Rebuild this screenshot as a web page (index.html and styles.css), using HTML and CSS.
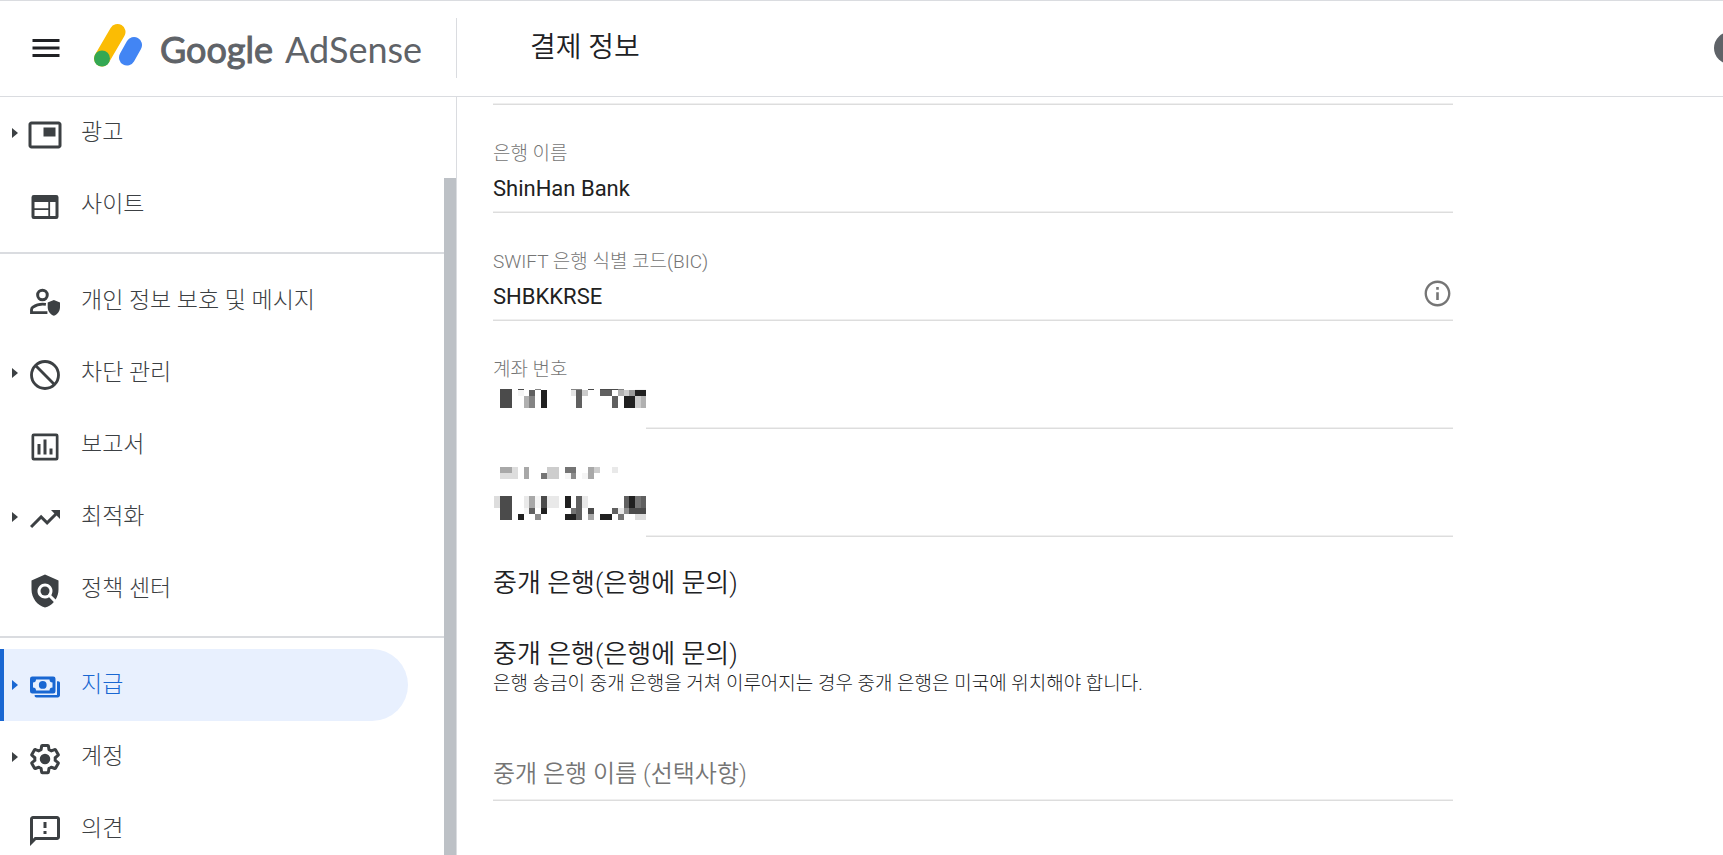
FILE: index.html
```html
<!DOCTYPE html>
<html lang="ko">
<head>
    <meta charset="UTF-8">
    <meta name="viewport" content="width=device-width, initial-scale=1.0">
    <title>Google AdSense</title>
    <link rel="stylesheet" href="styles.css">
</head>
<body>
    <header class="header">
        <div class="brand">
            <button class="icon-btn" type="button" aria-label="메뉴">
                <svg viewBox="0 0 24 24"><path d="M3 6h18v2H3zM3 11h18v2H3zM3 16h18v2H3z"/></svg>
            </button>
            <a href="#" class="logo">
                <svg class="logo-mark" viewBox="0 0 50 44">
                    <path d="M24.500 9L9 35.500" stroke="#fbbc04"/>
                    <path d="M41 22L34 34.500" stroke="#4285f4"/>
                    <circle cx="9" cy="35.500" r="8" fill="#34a853"/>
                </svg>
                <span class="logo-text"><span class="logo-google">Google</span> AdSense</span>
            </a>
        </div>
        <h1>결제 정보</h1>
        <button class="help-btn" type="button" aria-label="도움말"></button>
    </header>

    <div class="layout">
        <aside class="sidebar">
            <nav class="nav">
                <a href="#" class="nav-item has-children">
                    <svg viewBox="0 0 24 24"><path fill-rule="evenodd" d="M21 3H3c-1.100 0-2 .9-2 2v14c0 1.100.9 2 2 2h18c1.100 0 2-.9 2-2V5c0-1.100-.9-2-2-2zm0 16H3V5h18zM11 7h8v6h-8z"/></svg>
                    <span>광고</span>
                </a>
                <a href="#" class="nav-item">
                    <svg viewBox="0 0 24 24"><path fill-rule="evenodd" d="M4.500 4h15A1.500 1.500 0 0 1 21 5.500v13a1.500 1.500 0 0 1-1.500 1.500h-15A1.500 1.500 0 0 1 3 18.500v-13A1.500 1.500 0 0 1 4.500 4zM5 8.700v4.100h9.200V8.700zM5 14v4h9.200v-4zm10.400-5.300V18H19V8.700z"/></svg>
                    <span>사이트</span>
                </a>
                <hr>
                <a href="#" class="nav-item">
                    <svg viewBox="0 0 24 24">
                        <circle cx="10.300" cy="6.700" r="3.200" fill="none" stroke="currentColor" stroke-width="2"/>
                        <path fill="none" stroke="currentColor" stroke-width="1.900" d="M12.600 12.900c-3.400-.5-6.900.6-8.600 1.800-.6.400-1 1-1 1.800v1.900h10.600"/>
                        <path d="M17.900 10l4.100 1.600v3c0 2.700-1.700 5.100-4.100 5.900-2.400-.8-4.100-3.200-4.100-5.900v-3z"/>
                    </svg>
                    <span>개인 정보 보호 및 메시지</span>
                </a>
                <a href="#" class="nav-item has-children">
                    <svg viewBox="0 0 24 24"><path fill="none" stroke="currentColor" stroke-width="1.900" d="M12 3a9 9 0 1 0 0 18a9 9 0 1 0 0-18zM5.700 5.700l12.600 12.600"/></svg>
                    <span>차단 관리</span>
                </a>
                <a href="#" class="nav-item">
                    <svg viewBox="0 0 24 24"><path fill-rule="evenodd" d="M4.500 3h15A1.500 1.500 0 0 1 21 4.500v15a1.500 1.500 0 0 1-1.500 1.500h-15A1.500 1.500 0 0 1 3 19.500v-15A1.500 1.500 0 0 1 4.500 3zM4.800 4.800v14.400h14.400V4.800zM7 10h2v7H7zm4-3h2v10h-2zm4 6h2v4h-2z"/></svg>
                    <span>보고서</span>
                </a>
                <a href="#" class="nav-item has-children">
                    <svg viewBox="0 0 24 24"><path d="M16 6l2.290 2.290-4.880 4.880-4-4L2 16.590 3.410 18l6-6 4 4 6.300-6.290L22 12V6z"/></svg>
                    <span>최적화</span>
                </a>
                <a href="#" class="nav-item">
                    <svg viewBox="0 0 24 24"><path d="M21 5l-9-4-9 4v6c0 5.550 3.840 10.740 9 12 2.300-.56 4.330-1.900 5.880-3.710l-3.120-3.120c-1.940 1.290-4.580 1.070-6.290-.64-1.950-1.950-1.950-5.120 0-7.070 1.950-1.950 5.120-1.950 7.070 0 1.710 1.710 1.920 4.350.64 6.290l2.900 2.900C20.290 15.690 21 13.380 21 11z"/><circle cx="12" cy="12" r="3"/></svg>
                    <span>정책 센터</span>
                </a>
                <hr>
                <a href="#" class="nav-item has-children active">
                    <svg viewBox="0 0 24 24">
                        <path fill-rule="evenodd" d="M3.500 5h14A1.500 1.500 0 0 1 19 6.500v8.300a1.500 1.500 0 0 1-1.500 1.500h-14A1.500 1.500 0 0 1 2 14.800V6.500A1.500 1.500 0 0 1 3.500 5zM6 7a2 2 0 0 1-2 2v3.300a2 2 0 0 1 2 2h9a2 2 0 0 1 2-2V9a2 2 0 0 1-2-2z"/>
                        <circle cx="10.500" cy="10.600" r="2.600"/>
                        <path d="M20 8.200h.8c.7 0 1.200.5 1.200 1.200v8.100c0 .8-.7 1.500-1.500 1.500H6.300c-.7 0-1.200-.5-1.200-1.100v-.6H20z"/>
                    </svg>
                    <span>지급</span>
                </a>
                <a href="#" class="nav-item has-children">
                    <svg viewBox="0 0 24 24">
                        <path fill="none" stroke="currentColor" stroke-width="2.200" stroke-linejoin="round" transform="translate(1.100 1.100) scale(.91)" d="M19.430 12.980c.04-.32.07-.64.07-.98 0-.34-.03-.66-.07-.98l2.110-1.650c.19-.15.24-.42.12-.64l-2-3.460c-.09-.16-.26-.25-.44-.25-.06 0-.12.010-.17.030l-2.490 1c-.52-.4-1.080-.73-1.690-.98l-.38-2.650C14.460 2.180 14.250 2 14 2h-4c-.25 0-.46.18-.49.42l-.38 2.650c-.61.25-1.170.59-1.690.98l-2.490-1c-.06-.02-.12-.03-.18-.03-.17 0-.34.09-.43.25l-2 3.460c-.13.22-.07.49.12.64l2.110 1.650c-.04.32-.07.65-.07.98 0 .33.03.66.07.98l-2.110 1.650c-.19.15-.24.42-.12.64l2 3.460c.09.16.26.25.44.25.06 0 .12-.01.17-.03l2.490-1c.52.4 1.080.73 1.690.98l.38 2.650c.03.24.24.42.49.42h4c.25 0 .46-.18.49-.42l.38-2.650c.61-.25 1.170-.59 1.690-.98l2.490 1c.06.02.12.03.18.03.17 0 .34-.09.43-.25l2-3.460c.12-.22.07-.49-.12-.64z"/>
                        <circle cx="12" cy="12" r="3.500"/>
                    </svg>
                    <span>계정</span>
                </a>
                <a href="#" class="nav-item">
                    <svg viewBox="0 0 24 24"><path d="M20 2H4c-1.100 0-1.990.9-1.990 2L2 22l4-4h14c1.100 0 2-.9 2-2V4c0-1.100-.9-2-2-2zm0 14H5.170L4 17.170V4h16zM11 12h2v2h-2zm0-6h2v4h-2z"/></svg>
                    <span>의견</span>
                </a>
            </nav>
            <div class="scrollbar"><div class="scrollbar-thumb"></div></div>
        </aside>

        <main class="content">
            <form class="form">
                <div class="field-end"></div>
                <div class="field">
                    <label for="bank-name">은행 이름</label>
                    <input type="text" id="bank-name" value="ShinHan Bank">
                </div>
                <div class="field">
                    <label for="swift">SWIFT 은행 식별 코드(BIC)</label>
                    <div class="input-row">
                        <input type="text" id="swift" value="SHBKKRSE">
                        <button class="info-btn" type="button" aria-label="정보">
                            <svg viewBox="0 0 24 24"><path d="M11 7h2v2h-2zm0 4h2v6h-2zm1-9C6.480 2 2 6.480 2 12s4.480 10 10 10 10-4.480 10-10S17.520 2 12 2zm0 18.200c-4.500 0-8.200-3.700-8.200-8.200s3.700-8.200 8.200-8.200 8.200 3.700 8.200 8.200-3.700 8.200-8.200 8.200z"/></svg>
                        </button>
                    </div>
                </div>
                <div class="field">
                    <label for="account">계좌 번호</label>
                    <input type="text" id="account">
                    <svg class="mask" width="153" height="40" shape-rendering="crispEdges">
                        <path fill="#4b4b4b" d="M7 0h12v19H7zM25 0h6v1h-6zM95 0h6v1h-6zM107 0h18v1h-18z"/>
                        <path fill="#848484" d="M42 0h6v1h-6zM78 0h11v1H78zM125 0h6v1h-6zM36 7h6v12h-6z"/>
                        <path fill="#f5f5f5" d="M25 1h6v6h-6zM142 0h11v1h-11z"/>
                        <path fill="#606060" d="M36 1h6v6h-6zM83 1h6v18h-6zM107 1h12v6h-12zM119 7h6v12h-6z"/>
                        <path fill="#202020" d="M48 1h6v18h-6zM142 1h11v6h-11zM131 7h11v12h-11z"/>
                        <path fill="#b0b0b0" d="M31 7h5v12h-5zM125 1h6v6h-6zM148 7h5v12h-5z"/>
                        <path fill="#e5e5e5" d="M78 1h5v6h-5z"/>
                        <path fill="#cbcbcb" d="M89 1h6v6h-6zM131 1h5v6h-5zM142 7h6v12h-6z"/>
                        <path fill="#999" d="M136 1h6v6h-6z"/>
                    </svg>
                </div>
                <div class="field">
                    <input type="text" aria-label="계좌 번호 확인">
                    <svg class="mask" width="153" height="108" shape-rendering="crispEdges">
                        <path fill="#a8a8a8" d="M7 38h12v6H7zM31 38h5v12h-5zM95 38h6v12h-6zM36 67h6v12h-6zM95 85h6v6h-6z"/>
                        <path fill="#ddd" d="M19 38h6v6h-6zM7 44h18v6H7zM1 67h6v12H1zM142 85h11v6h-11z"/>
                        <path fill="#cdcdcd" d="M54 38h12v12H54zM101 38h6v6h-6z"/>
                        <path fill="#747474" d="M72 38h11v6H72zM48 44h6v6h-6zM78 79h5v6h-5zM142 67h6v12h-6zM125 85h6v6h-6z"/>
                        <path fill="#e9e9e9" d="M119 38h6v6h-6zM31 67h5v12h-5zM54 67h12v12H54zM89 67h6v12h-6zM125 79h6v6h-6z"/>
                        <path fill="#f5f5f5" d="M72 44h6v6h-6zM89 44h6v6h-6zM42 67h6v12h-6zM31 79h5v6h-5z"/>
                        <path fill="#8c8c8c" d="M78 44h5v6h-5zM42 85h6v6h-6zM131 79h5v6h-5z"/>
                        <path fill="#4b4b4b" d="M7 67h12v24H7zM48 67h6v12h-6zM95 79h6v6h-6zM136 79h17v6h-17z"/>
                        <path fill="#606060" d="M36 79h6v6h-6zM83 67h6v24h-6zM119 79h6v6h-6zM131 67h5v12h-5zM148 67h5v12h-5z"/>
                        <path fill="#202020" d="M25 85h6v6h-6zM48 79h6v6h-6zM72 67h6v12h-6zM72 85h11v6H72zM107 85h12v6h-12zM136 67h6v12h-6z"/>
                    </svg>
                </div>
                <h2>중개 은행(은행에 문의)</h2>
                <h2>중개 은행(은행에 문의)</h2>
                <p>은행 송금이 중개 은행을 거쳐 이루어지는 경우 중개 은행은 미국에 위치해야 합니다.</p>
                <div class="field field-optional">
                    <input type="text" placeholder="중개 은행 이름 (선택사항)">
                </div>
            </form>
        </main>
    </div>
</body>
</html>
```
FILE: styles.css
```css
* {
    margin: 0;
    padding: 0;
    box-sizing: border-box;
}

body {
    height: 100vh;
    display: flex;
    flex-direction: column;
    overflow: hidden;
    background: #fff;
    color: #202124;
    font-family: Roboto, 'Noto Sans CJK KR', sans-serif;
    font-weight: 300;
}

a {
    color: inherit;
    text-decoration: none;
}

button {
    border: none;
    background: none;
    cursor: pointer;
}

svg {
    display: block;
    flex-shrink: 0;
    fill: currentColor;
}

.header {
    display: flex;
    align-items: center;
    flex-shrink: 0;
    height: 97px;
    padding-bottom: 2px;
    border-top: 1px solid #dadce0;
    border-bottom: 1px solid #dadce0;
    overflow: hidden;
}

.brand {
    display: flex;
    align-items: center;
    width: 457px;
    height: 60px;
    padding-left: 28px;
    border-right: 1px solid #dadce0;
}

.icon-btn svg {
    width: 36px;
    height: 36px;
    color: #202124;
}

.logo {
    display: flex;
    align-items: center;
    margin-left: 29px;
    color: #5f6368;
}

.logo-mark {
    width: 50px;
    height: 44px;
    margin-bottom: 6px;
    fill: none;
    stroke-width: 16px;
    stroke-linecap: round;
}

.logo-text {
    margin: 2px 0 0 17px;
    font-family: Lato, sans-serif;
    font-size: 36px;
    font-weight: 400;
    line-height: 44px;
    white-space: nowrap;
}

.logo-google {
    margin-right: 4px;
    -webkit-text-stroke: 1px #5f6368;
}

.header h1 {
    padding-left: 73px;
    font-size: 28px;
    font-weight: 350;
    line-height: 40px;
}

.help-btn {
    flex-shrink: 0;
    width: 32px;
    height: 32px;
    margin-left: auto;
    margin-right: -23px;
    border-radius: 50%;
    background: #5f6368;
}

.layout {
    display: flex;
    flex: 1;
    min-height: 0;
}

.sidebar {
    display: flex;
    flex-shrink: 0;
    width: 457px;
    border-right: 1px solid #dadce0;
    overflow: hidden;
}

.nav {
    flex: 1;
}

.nav hr {
    height: 2px;
    margin: 11px 0;
    border: none;
    background: #dadce0;
}

.nav-item {
    display: flex;
    align-items: center;
    height: 72px;
    margin-right: 36px;
    padding-left: 8px;
    border-left: 4px solid transparent;
    color: #3c4043;
    font-size: 23px;
    line-height: 32px;
}

.nav-item::before {
    content: "";
    width: 6px;
    height: 10px;
}

.nav-item.has-children::before {
    background: currentColor;
    clip-path: polygon(0 0, 100% 50%, 0 100%);
}

.nav-item svg {
    width: 36px;
    height: 36px;
    margin: 4px 18px 0 9px;
}

.nav-item.active {
    border-left-color: #1967d2;
    border-radius: 0 36px 36px 0;
    background: #e8f0fe;
    color: #1967d2;
}

.scrollbar {
    width: 12px;
    padding-top: 81px;
}

.scrollbar-thumb {
    height: 100%;
    background: #bdc1c6;
}

.content {
    flex: 1;
    padding: 0 36px;
    overflow: hidden;
}

.form {
    max-width: 960px;
}

.field-end,
.field {
    border-bottom: 1px solid #ddd;
    box-shadow: inset 0 -1px #efefef;
}

.field-end {
    height: 8px;
}

.field {
    position: relative;
    display: flex;
    flex-direction: column;
    justify-content: flex-end;
    height: 108px;
    padding-bottom: 9px;
}

.field label {
    margin-bottom: 7px;
    color: #757575;
    font-size: 19px;
    line-height: 24px;
}

.field input {
    width: 100%;
    height: 30px;
    border: none;
    outline: none;
    background: none;
    color: #212121;
    font-family: inherit;
    font-size: 22px;
    font-weight: 400;
}

.field-optional {
    height: 105px;
    padding-bottom: 11px;
}

.field-optional input {
    font-size: 24px;
    font-weight: 350;
}

.field input::placeholder {
    color: #757575;
}

.input-row {
    display: flex;
    align-items: flex-end;
    height: 30px;
}

.info-btn {
    padding-bottom: 2px;
    color: #757575;
}

.info-btn svg {
    width: 31px;
    height: 31px;
}

/* hides the private values and the start of the underline */
.mask {
    position: absolute;
    left: 0;
    bottom: -1px;
    background: #fff;
}

.form h2 {
    margin-top: 28px;
    font-size: 26px;
    font-weight: 350;
    line-height: 36px;
}

.form h2 + h2 {
    margin-top: 35px;
}

.form p {
    font-size: 19px;
    line-height: 24px;
}
```
